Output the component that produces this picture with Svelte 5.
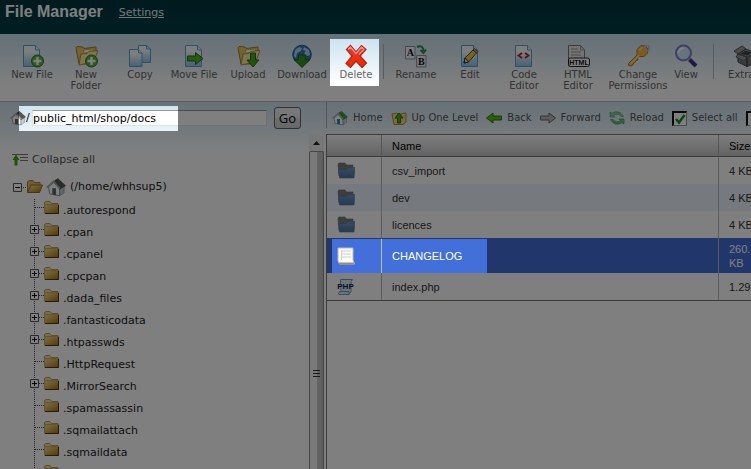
<script>
  const tools = [
    { icon: 'newfile', label: 'New File' },
    { icon: 'newfolder', label: 'New Folder' },
    { icon: 'copy', label: 'Copy' },
    { icon: 'movefile', label: 'Move File' },
    { icon: 'upload', label: 'Upload' },
    { icon: 'download', label: 'Download' },
    { icon: 'delete', label: 'Delete' },
    { sep: true },
    { icon: 'rename', label: 'Rename' },
    { icon: 'edit', label: 'Edit' },
    { icon: 'code', label: 'Code Editor' },
    { icon: 'html', label: 'HTML Editor' },
    { icon: 'key', label: 'Change Permissions', size: 'wide' },
    { icon: 'view', label: 'View', size: 'narrow' },
    { sep: true, size: 'spaced' },
    { icon: 'extract', label: 'Extract' }
  ];

  const nav = [
    { icon: 'home', label: 'Home' },
    { icon: 'up', label: 'Up One Level' },
    { icon: 'back', label: 'Back' },
    { icon: 'forward', label: 'Forward' },
    { icon: 'reload', label: 'Reload' }
  ];

  const folders = [
    { name: '.autorespond' },
    { name: '.cpan', more: true },
    { name: '.cpanel', more: true },
    { name: '.cpcpan', more: true },
    { name: '.dada_files', more: true },
    { name: '.fantasticodata', more: true },
    { name: '.htpasswds', more: true },
    { name: '.HttpRequest' },
    { name: '.MirrorSearch', more: true },
    { name: '.spamassassin' },
    { name: '.sqmailattach' },
    { name: '.sqmaildata' },
    { name: '' }
  ];

  const files = [
    { name: 'csv_import', size: '4 KB', kind: 'folder' },
    { name: 'dev', size: '4 KB', kind: 'folder' },
    { name: 'licences', size: '4 KB', kind: 'folder' },
    { name: 'CHANGELOG', size: '260.\nKB', kind: 'text', selected: true },
    { name: 'index.php', size: '1.29', kind: 'php' }
  ];

  let path = $state('public_html/shop/docs');
  let allSelected = $state(true);
</script>

{#snippet page()}
  <path d="M3.5 1.5h12l4 4.500v16.500h-16z" fill="url(#paper)" stroke="#5f9fd2" />
  <path d="M15.500 1.500v4.500h4" fill="#e6f3fb" stroke="#5f9fd2" />
{/snippet}

{#snippet openFolder()}
  <path d="M2 4l1-1.500 6 .5 1 1.500 12-1.500v3L19 20H5z" fill="#e9c765" stroke="#a27a24" />
  <path d="M9.500 6l10-1 .5 3-10 1z" fill="#fff" stroke="#c49a3c" stroke-width=".7" />
  <path d="M5 21l2-11 6-.5 1.500-2 9.500-1-4.500 11.500z" fill="#ffe9a0" stroke="#b98e30" />
{/snippet}

{#snippet plusBadge()}
  <circle cx="17.500" cy="17" r="6" fill="#5fae45" stroke="#2a7a1c" />
  <path d="M17.500 13v8M13.500 17h8" stroke="#fff" stroke-width="2.400" />
{/snippet}

{#snippet toolIcon(name)}
  <svg width="24" height="24" viewBox="0 0 24 24" aria-hidden="true">
    {#if name === 'newfile'}
      {@render page()}{@render plusBadge()}
    {:else if name === 'newfolder'}
      {@render openFolder()}{@render plusBadge()}
    {:else if name === 'copy'}
      <path d="M10.500 1.500h8l4 3.500v13.500h-12z" fill="url(#paper)" stroke="#5f9fd2" />
      <path d="M18.500 1.500V5h4" fill="none" stroke="#5f9fd2" />
      <path d="M1.500 5.500h9l3.500 3.500v13.500H1.500z" fill="url(#paper)" stroke="#5f9fd2" />
      <path d="M10.500 5.500V9H14" fill="#eef8ff" stroke="#5f9fd2" />
    {:else if name === 'movefile'}
      {@render page()}
      <path d="M5.500 12h8V8.500l7.500 6-7.500 6V17h-8z" fill="#53b51c" stroke="#246a10" />
    {:else if name === 'upload'}
      {@render openFolder()}
      <path d="M14.500 9h5v7h3.500L17 23l-6-7h3.500z" fill="#43a91f" stroke="#226b13" />
    {:else if name === 'download'}
      <circle cx="12" cy="10.500" r="9.300" fill="#3273bb" stroke="#2a5d96" />
      <path d="M5 6l4-3 3 1-1 3-4 2-1 5-2-2zM14 3l5 3 1 5-3 1-3-3 2-2-3-1z" fill="#a8d4ef" />
      <path d="M8.500 11h7v4.500H20l-8 8-8-8h4.500z" fill="#35941c" stroke="#1e6614" />
    {:else if name === 'delete'}
      <path d="M2.500 5.500l4-4L12 8l5.500-6.500 4.500 4-6 6.500 6.500 7-4.500 4.500L12 17l-5.500 6.500-4.500-4L8 12z" fill="url(#cross)" stroke="#b02113" stroke-width="1.200" />
      <path d="M4 5.500L6.500 3 12 9.500 17.500 3 20 5.500l-5 5" fill="none" stroke="#f58f83" stroke-width="1.300" />
    {:else if name === 'rename'}
      <path d="M1.500 2.500h9.500v12.500H1.500z" fill="#f5f7fa" stroke="#8d95a0" />
      <path d="M12.500 11.500H22V23h-9.500z" fill="#e9edf4" stroke="#8d95a0" />
      <text x="6.300" y="12" class="letter">A</text>
      <text x="17.300" y="21" class="letter">B</text>
      <path d="M13 3c4-2 6.500 0 6.500 4M16.500 6l3 3 2.500-3.500" fill="none" stroke="#2f8a51" stroke-width="2" />
    {:else if name === 'edit'}
      {@render page()}
      <path d="M6 19l1-5L15 6l3.500 3-8 9z" fill="#f1c832" stroke="#4b4436" />
      <path d="M15 6l1.500-1.500L20 7.500 18.500 9z" fill="#e8a49c" stroke="#4b4436" />
      <path d="M6 19l1-5 3.500 4z" fill="#eee" stroke="#333" />
      <path d="M6 19l.5-2 1.500 1.500z" fill="#222" />
    {:else if name === 'code'}
      {@render page()}
      <path d="M10 9l-3.500 2.500L10 14M13 9l3.500 2.500L13 14" fill="none" stroke="#d51616" stroke-width="1.800" />
    {:else if name === 'html'}
      <path d="M2.500 1.500h12l4 4.500v16h-16z" fill="#e8e8e8" stroke="#777" />
      <path d="M14.500 1.500V6h4M5 5h7M5 8h10M5 11h10" fill="none" stroke="#999" />
      <rect x="2.500" y="14" width="21" height="8.500" rx="2" fill="#fff" stroke="#222" />
      <text x="13" y="21" class="html">HTML</text>
    {:else if name === 'key'}
      <path d="M2.500 19.500L11 11V5.500l4-4 4 .5 3 3-.5 4-3.500 3.500h-5L11.500 14l.5 2-2 .5-1 2H8l-2 3.500-3.500-.5z" fill="#f2bd48" stroke="#b07c22" />
      <path d="M5 19.500l8-8M13.500 6l3-2.500" stroke="#ffe897" stroke-width="1.500" />
      <path d="M17 6l2-4 3.500-.5.500 4-3 2.500" fill="none" stroke="#b9bdc2" stroke-width="1.500" />
    {:else if name === 'view'}
      <path d="M15.500 15.500l6.500 6.500" stroke="#3d3485" stroke-width="4" />
      <circle cx="9.500" cy="9" r="7.500" fill="#cce6f9" stroke="#7a7ec6" stroke-width="2" />
      <path d="M5 9c0-3 2-5 5-5" fill="none" stroke="#fff" stroke-width="2" />
    {:else if name === 'extract'}
      <path d="M4 10l9 3v9.500l-9-4.500zM13 13l9-4v9.500l-9 4z" fill="#777" stroke="#444" />
      <path d="M4 10l8-5 10 4-9 4zM4 10l-4-3 8-5 4 3zM13 13l-3 4-8-4 2-3z" fill="#999" stroke="#555" />
      <path d="M6 10l6-3.500 7 2.500-6 2.500z" fill="#444" />
    {/if}
  </svg>
{/snippet}

{#snippet houseIcon(roof, size)}
  <svg width={size} height={size} viewBox="0 0 16 16" aria-hidden="true">
    <path d="M2 8l4-3.500L11 9v6l-8-1.500z" fill="#fff" stroke="#8b979e" stroke-width=".8" />
    <path d="M11 9l3.500-2v5.500L11 15z" fill="#c3ccd2" stroke="#8b979e" stroke-width=".6" />
    <path d="M5.500 3.500L9.500 1 16 7l-5 3z" fill={roof} />
    <path d="M.5 8.500L6 3.500l5 5.500" fill="none" stroke="#aaa" stroke-width="1.300" />
    <path d="M5 9h3v5.500l-3-.5z" fill={roof === '#555' ? '#666' : '#2e87c8'} />
  </svg>
{/snippet}

{#snippet navIcon(name)}
  {#if name === 'home'}
    {@render houseIcon('#3b9f33', 16)}
  {:else}
    <svg width="16" height="16" viewBox="0 0 16 16" aria-hidden="true">
      {#if name === 'up'}
        <path d="M1 4l5-1 1 1.500 8-1.500v9l-3 2.500H3z" fill="#f5d678" stroke="#b08a35" />
        <path d="M6.500 13V8H4l4-5 4 5H9.500v5z" fill="#4cab1b" stroke="#2a7010" />
      {:else if name === 'back'}
        <path d="M.5 8L7 3v3h8.500v4H7v3z" fill="#5cbc12" stroke="#2d7a08" />
      {:else if name === 'forward'}
        <path d="M15.500 8L9 3v3H.5v4H9v3z" fill="#bbb" stroke="#666" />
      {:else if name === 'reload'}
        <path d="M1 2v5h5L4.500 5.500C7 3.500 10 4 12 6.500h2.500C12 1.500 6.500.5 3 3.500z" fill="#7fd08c" stroke="#4ca65c" stroke-width=".7" />
        <path d="M15 14V9h-5l1.500 1.500C9 12.500 6 12 4 9.500H1.500C4 14.500 9.500 15.500 13 12.500z" fill="#6cc17a" stroke="#3b934b" stroke-width=".7" />
      {/if}
    </svg>
  {/if}
{/snippet}

<svg class="defs" width="0" height="0" aria-hidden="true">
  <defs>
    <linearGradient id="paper" x1="0" y1="0" x2="0" y2="1">
      <stop offset="0.3" stop-color="#f7fcff" /><stop offset="1" stop-color="#8cc4ea" />
    </linearGradient>
    <linearGradient id="cross" x1="0" y1="0" x2="0" y2="1">
      <stop offset="0.3" stop-color="#dd3b31" /><stop offset="0.7" stop-color="#f52b06" />
    </linearGradient>
    <linearGradient id="manila" x1="0" y1="0" x2="1" y2="1">
      <stop offset="0" stop-color="#f0dda4" /><stop offset="0.4" stop-color="#dcb964" /><stop offset="1" stop-color="#a86c08" />
    </linearGradient>
    <linearGradient id="bluefolder" x1="0" y1="0" x2="0" y2="1">
      <stop offset="0" stop-color="#6f96c4" /><stop offset="1" stop-color="#4d73a3" />
    </linearGradient>
  </defs>
</svg>

<div class="app">
  <header>
    <h1>File Manager</h1>
    <a href="#settings">Settings</a>
  </header>

  <div class="toolbar" role="toolbar" aria-label="File actions">
    {#each tools as t}
      {#if t.sep}
        <span class="sep {t.size ?? ''}"></span>
      {:else}
        <button class="tool {t.size ?? ''}">{@render toolIcon(t.icon)}<span>{t.label}</span></button>
      {/if}
    {/each}
  </div>

  <main>
    <section class="side">
      <form class="path" onsubmit={(e) => e.preventDefault()}>
        <label for="path">{@render houseIcon('#555', 16)}/</label>
        <input id="path" type="text" bind:value={path} />
        <button>Go</button>
      </form>
      <div class="sidebody">
        <div class="tree">
          <button class="collapse">
            <svg width="16" height="14" viewBox="0 0 16 14" aria-hidden="true">
              <path d="M0 1.500h16M8 4.500h8M8 7.500h8" stroke="#777" />
              <path d="M2.500 12.500V7H.5L4 1.500 7.500 7h-2v5.500z" fill="#3fa30d" />
            </svg>
            Collapse all
          </button>
          <div class="root">
            <button class="toggle" aria-label="Collapse home">
              <svg width="9" height="9" viewBox="0 0 9 9"><path d="M.5.5h8v8h-8z" fill="#fff" stroke="#555" /><path d="M2 4.500h5" stroke="#000" /></svg>
            </button>
            <svg class="dots" width="5" height="1"><path d="M1 .5h4" stroke="#444" stroke-dasharray="1" /></svg>
            <svg width="16" height="14" viewBox="0 0 16 14" aria-hidden="true">
              <path d="M.5 12V2l1.500-1.500h4L7.500 2.500H13V6" fill="#e3bd58" stroke="#a88138" />
              <path d="M.5 12.500L4 5h11.500l-3 7.500z" fill="url(#manila)" stroke="#8f6c28" />
            </svg>
            <span class="house">{@render houseIcon('#555', 20)}</span>
            <span>(/home/whhsup5)</span>
          </div>
          <ul>
            {#each folders as f}
              <li>
                {#if f.more}
                  <button class="toggle" aria-label="Expand {f.name}">
                    <svg width="14" height="22" viewBox="0 0 14 22">
                      <path d="M4.500 0v22M5 8.500h9" stroke="#444" stroke-dasharray="1" />
                      <path d="M.5 4.500h8v8h-8z" fill="#fff" stroke="#555" />
                      <path d="M2 8.500h5M4.500 6v5" stroke="#000" />
                    </svg>
                  </button>
                {:else}
                  <svg width="14" height="22" viewBox="0 0 14 22" aria-hidden="true">
                    <path d="M4.500 0v22M5 8.500h9" stroke="#444" stroke-dasharray="1" />
                  </svg>
                {/if}
                <svg width="15" height="22" viewBox="0 0 15 22" aria-hidden="true">
                  <path d="M.5 13V3.500L2 2.500h4L7.500 4.500h6.500V7" fill="#f0dda0" stroke="#b79c5c" />
                  <path d="M0 5h15v9.500H0z" fill="url(#manila)" />
                  <path d="M.5 14V5.500H14" fill="none" stroke="#c9a860" />
                  <path d="M1 14.500h13.500V6" fill="none" stroke="#4a340c" />
                </svg>
                <span>{f.name}</span>
              </li>
            {/each}
          </ul>
        </div>
        <div class="scroll" aria-hidden="true">
          <svg width="15" height="17" viewBox="0 0 15 17"><path d="M4 11l3.500-4 3.500 4z" fill="#222" /></svg>
          <div class="thumb"><i></i><i></i><i></i></div>
        </div>
      </div>
    </section>

    <section class="list">
      <div class="nav">
        {#each nav as n}
          <button>{@render navIcon(n.icon)}<span>{n.label}</span></button>
        {/each}
        <label><input type="checkbox" bind:checked={allSelected} /><span>Select all</span></label>
        <label><input type="checkbox" aria-label="Unselect all" /></label>
      </div>
      <div class="tablewrap">
        <table>
          <thead>
            <tr><th class="c-icon"></th><th>Name</th><th class="c-size">Size</th></tr>
          </thead>
          <tbody>
            {#each files as f}
              <tr class:selected={f.selected}>
                <td class="c-icon">
                  <svg width="18" height="18" viewBox="0 0 18 18" aria-hidden="true">
                    {#if f.kind === 'folder'}
                      <path d="M1 2l1-1h6l1.500 2H16v11H2z" fill="#7a7a7a" stroke="#686868" stroke-width=".6" />
                      <path d="M2.500 16L1.500 7.500h8L11 5.500h7L17 16z" fill="url(#bluefolder)" stroke="#56799f" stroke-width=".6" />
                    {:else if f.kind === 'text'}
                      <path d="M1 1h15v12l1.500 4H2.500L1 14z" fill="#fafafa" stroke="#bbb" />
                      <path d="M2 16.500h15" stroke="#9a8c7c" stroke-width="2" />
                      <path d="M5 4h9M5 7h9M5 10h9M4.500 3v10" stroke="#d2d2d2" />
                    {:else}
                      <path d="M3.500 1.500h12l-1.500 2v10l-2 3H2c-1-2 0-3 2-3z" fill="#dcebf8" stroke="#7298bd" />
                      <path d="M4 13.500h8v3" fill="none" stroke="#7298bd" />
                      <text x="8.500" y="11" class="php">PHP</text>
                    {/if}
                  </svg>
                </td>
                <td>{f.name}</td>
                <td class="c-size">{f.size}</td>
              </tr>
            {/each}
          </tbody>
        </table>
      </div>
    </section>
  </main>

  <!-- Dimmed layer; openings highlight the path, the Delete action and the chosen file -->
  <svg class="spotlight" aria-hidden="true">
    <path fill-rule="evenodd" d="M0 0H9999V9999H0ZM330 39h49v47h-49ZM19 106h159v25H19ZM332 239h155v34H332Z" />
  </svg>
</div>

<style>
  :global(body) { margin: 0; }
  .defs { position: absolute; }
  .app {
    position: relative;
    display: flex;
    flex-direction: column;
    height: 100vh;
    overflow: hidden;
    background: #fff;
    color: #333;
    font: 11px/14px Verdana, "DejaVu Sans", sans-serif;
  }
  .spotlight {
    position: absolute;
    inset: 0;
    width: 100%;
    height: 100%;
    fill: rgba(0, 0, 0, 0.5);
    pointer-events: none;
  }
  svg { display: block; flex: none; }
  button { border: 0; padding: 0; background: none; color: inherit; font: inherit; }

  header {
    display: flex;
    align-items: center;
    gap: 16px;
    height: 24px;
    padding: 0 5px 10px;
    background: linear-gradient(#00343c, #003e46);
    color: #fff;
  }
  h1 { margin: 0; font: bold 16px/24px "Liberation Sans", Arial, sans-serif; }
  header a { padding-top: 2px; color: #e4f0f4; }

  .toolbar {
    display: flex;
    align-items: flex-start;
    height: 57px;
    padding: 10px 0 0 5px;
    border-bottom: 1px solid #bbb;
    background: linear-gradient(#c8e0ee, #fff 75%);
    color: #666;
    font-size: 10px;
    line-height: 11px;
  }
  .tool {
    display: flex;
    flex: 0 0 54px;
    flex-direction: column;
    align-items: center;
    gap: 1px;
  }
  .tool.wide { flex-basis: 66px; }
  .tool.narrow { flex-basis: 30px; }
  .sep { flex: 0 0 1px; height: 35px; margin-right: 5px; background: #aab6bc; }
  .sep.spaced { margin-left: 12px; }
  .letter { font: bold 10px "Liberation Serif", serif; text-anchor: middle; fill: #111; }
  .html { font: bold 7px "Liberation Sans", sans-serif; text-anchor: middle; fill: #111; }
  .php { font: bold 8px "Liberation Sans", sans-serif; text-anchor: middle; fill: #10233f; }

  main {
    display: flex;
    flex: 1;
    min-height: 0;
    background: linear-gradient(#cde3f0, #fff 50px);
  }
  .side { display: flex; flex: 0 0 326px; flex-direction: column; box-sizing: border-box; }
  .path {
    display: flex;
    align-items: center;
    box-sizing: border-box;
    height: 32px;
    padding: 0 25px 0 10px;
    color: #000;
  }
  .path label { display: flex; align-items: center; width: 22px; }
  .path input {
    flex: 1;
    min-width: 0;
    box-sizing: border-box;
    height: 16px;
    margin-right: 7px;
    padding: 0;
    border: 1px solid #dde3e8;
    border-top-color: #999;
    background: #fff;
    color: #000;
    font: inherit;
  }
  .path button {
    width: 27px;
    height: 22px;
    border: 1px solid #666;
    border-radius: 3px;
    background: linear-gradient(#f2f2f2, #ebebeb 50%, #ddd 51%, #cfcfcf);
    font: 13px/19px "Open Sans", "Noto Sans", sans-serif;
  }
  .sidebody { display: flex; flex: 1; min-height: 0; }
  .tree { flex: 1; overflow: hidden; padding-top: 19px; color: #222; }
  .collapse { display: flex; align-items: center; gap: 4px; margin-left: 12px; color: #555; }
  .root { display: flex; align-items: center; height: 24px; margin-top: 8px; padding-left: 13px; }
  .house { margin: 0 4px 0 3px; }
  .toggle { display: block; }
  ul { margin: 0; padding: 0 0 0 30px; list-style: none; }
  li { display: flex; height: 22px; line-height: 23px; }
  li span { padding-left: 4px; }
  .scroll { display: flex; flex-direction: column; width: 15px; margin-right: 2px; background: #eee; }
  .thumb {
    display: flex;
    flex: 1;
    flex-direction: column;
    align-items: center;
    justify-content: center;
    gap: 2px;
    box-sizing: border-box;
    padding-top: 126px;
    border: 1px solid #888;
    border-bottom: 0;
    border-radius: 2px 2px 0 0;
    background: linear-gradient(90deg, #f4f4f4 50%, #ccc 51%, #bbb);
  }
  .thumb i { width: 7px; height: 1px; background: #333; }

  .list { display: flex; flex: 1; flex-direction: column; min-width: 0; overflow: hidden; }
  .nav {
    display: flex;
    align-items: center;
    gap: 8px;
    height: 32px;
    padding-left: 6px;
    color: #555;
    font-size: 10px;
    white-space: nowrap;
    background: linear-gradient(#aaa, #aaa) 0 0 / 1px 26px no-repeat;
  }
  .nav button, .nav label { display: flex; flex: none; align-items: center; gap: 5px; }
  .nav input {
    appearance: none;
    width: 15px;
    height: 15px;
    margin: 0;
    border: 1px solid #999;
    border-top: 2px solid #111;
    border-left: 2px solid #111;
    background: #fff;
  }
  .nav input:checked {
    background: #fff url("data:image/svg+xml,%3Csvg xmlns='http://www.w3.org/2000/svg' viewBox='0 0 12 12'%3E%3Cpath d='M2 6l3 3.500L10.500 2' fill='none' stroke='%2318852c' stroke-width='2.400'/%3E%3C/svg%3E") center / 12px;
  }
  .tablewrap {
    flex: 1;
    border-top: 1px solid #777;
    border-left: 1px solid #777;
    background: #fff;
  }
  table {
    width: calc(100% + 13px);
    border-spacing: 0;
    table-layout: fixed;
    border-bottom: 1px solid #777;
    font: 11px/14px "Liberation Sans", Arial, sans-serif;
  }
  th {
    box-sizing: border-box;
    height: 22px;
    padding: 0 0 0 10px;
    border-right: 1px solid #aaa;
    border-bottom: 1px solid #777;
    background: linear-gradient(#fff, #c4c4c4);
    color: #000;
    font-weight: normal;
    text-align: left;
  }
  td {
    box-sizing: border-box;
    height: 27px;
    padding: 0 0 0 10px;
    border-right: 1px solid #bbb;
    white-space: pre;
  }
  .c-icon { width: 55px; }
  .c-size { width: 45px; }
  th.c-size, td.c-size { border-right: 0; }
  tr:nth-child(even) td { background: #edf5ff; }
  tr.selected td { height: 35px; background: #426fd9; color: #fff; }
</style>
